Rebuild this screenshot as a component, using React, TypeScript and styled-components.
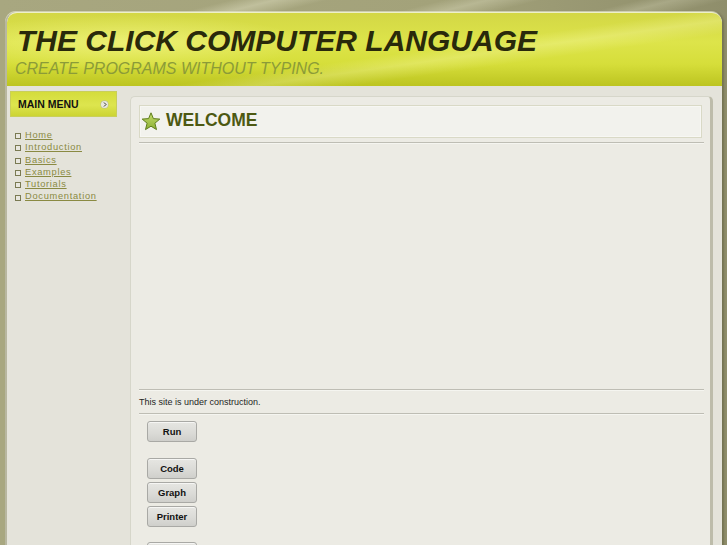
import React from "react";
import styled, { createGlobalStyle } from "styled-components";

const Global = createGlobalStyle`
  html, body { margin: 0; padding: 0; }
  body {
    background: #a3a27b;
    font-family: "Liberation Sans", Arial, sans-serif;
    overflow: hidden;
  }
`;

const Page = styled.div`
  min-height: 545px;
  box-sizing: border-box;
  padding: 12px 5px 0 5px;
  background:
    linear-gradient(166deg, transparent 0%, transparent 26%, rgba(255,255,230,0.3) 31%, transparent 37%, transparent 50%, rgba(255,255,230,0.25) 55%, transparent 61%, transparent 72%, rgba(255,255,230,0.2) 76%, transparent 82%) top / 100% 40px no-repeat,
    linear-gradient(90deg, #a8a780 0%, #a3a27a 60%, #8f8e6b 100%);
`;

const Frame = styled.div`
  width: 717px;
  min-height: 533px;
  box-sizing: border-box;
  background: #e4e3da;
  border-radius: 11px 11px 0 0;
  border-left: 2px solid #b8b7a0;
  box-shadow: 2px 0 2px rgba(70, 70, 40, 0.35), 0 -1px 0 rgba(255, 255, 235, 0.6);
  overflow: hidden;
`;

const Header = styled.header`
  height: 74px;
  box-sizing: border-box;
  padding: 11px 0 0 10px;
  border-top: 1px solid #eef0c8;
  background:
    radial-gradient(ellipse 260px 40px at 120px 30px, rgba(255,255,170,0.45), transparent 70%),
    linear-gradient(172deg, rgba(255,255,255,0) 55%, rgba(255,255,200,0.25) 62%, rgba(255,255,255,0) 70%),
    linear-gradient(180deg, #d3d745 0%, #dde44a 40%, #d6de3a 70%, #bcc420 100%);
  border-radius: 10px 10px 0 0;
`;

const Title = styled.h1`
  margin: 0;
  font-family: "Liberation Sans", Arial, sans-serif;
  font-size: 30px;
  line-height: 34px;
  font-weight: bold;
  font-style: italic;
  color: #29290b;
`;

const Slogan = styled.div`
  margin-top: 2px;
  font-size: 16px;
  line-height: 18px;
  font-style: italic;
  color: #8b9b38;
  margin-left: -2px;
`;

const Main = styled.div`
  display: flex;
  align-items: flex-start;
  padding: 0 9px 0 3px;
`;

const Sidebar = styled.aside`
  width: 107px;
  padding-top: 5px;
  margin-right: 13px;
  flex-shrink: 0;
`;

const MenuHead = styled.div`
  height: 26px;
  box-sizing: border-box;
  display: flex;
  align-items: center;
  justify-content: space-between;
  padding: 0 8px 0 7px;
  background: linear-gradient(180deg, #d4dc3c 0%, #dde54e 55%, #ccd434 100%);
  border: 1px solid #c9cf5a;
  font-size: 10.5px;
  font-weight: bold;
  color: #111;
`;

const ArrowDot = styled.span`
  width: 7px;
  height: 7px;
  border-radius: 50%;
  background: #e9e9dc;
  box-shadow: 0 0 0 0.5px #b8b89a;
  display: flex;
  align-items: center;
  justify-content: center;
`;

const MenuList = styled.ul`
  list-style: none;
  margin: 12px 0 0 0;
  padding: 0 0 0 5px;
`;

const MenuItem = styled.li`
  display: flex;
  align-items: center;
  height: 12.3px;
  font-size: 9.3px;
  line-height: 12.3px;
`;

const Bullet = styled.span`
  width: 6px;
  height: 6px;
  box-sizing: border-box;
  border: 1px solid #7a7a52;
  background: #e8e7df;
  margin: 2px 4px 0 0;
  flex-shrink: 0;
`;

const MenuLink = styled.a`
  color: #8a8a42;
  letter-spacing: 0.7px;
  text-decoration: underline;
  cursor: pointer;
`;

const Panel = styled.main`
  flex: 1;
  margin-top: 10px;
  min-height: 460px;
  box-sizing: border-box;
  padding: 8px 6px 0 8px;
  background: #ecebe4;
  border: 1px solid #d6d6ca;
  border-right: 3px solid #bdbcaa;
  border-bottom: none;
  border-radius: 5px 5px 0 0;
`;

const WelcomeBox = styled.div`
  width: 563px;
  height: 33px;
  box-sizing: border-box;
  display: flex;
  align-items: center;
  gap: 5px;
  padding-left: 1px;
  background: #f2f2ed;
  border: 1px solid #d9d9c6;
  box-shadow: inset 0 0 0 1px #f7f7f3;
`;

const WelcomeTitle = styled.h2`
  margin: -3px 0 0 0;
  font-size: 17.5px;
  font-weight: bold;
  color: #4d5912;
  line-height: 20px;
`;

const Rule = styled.div<{ $top?: number }>`
  width: 565px;
  height: 0;
  margin-top: ${(p) => p.$top ?? 0}px;
  border-top: 1px solid #bebdb4;
  border-bottom: 1px solid #f5f5f0;
`;

const Spacer = styled.div`
  height: 245px;
`;

const Note = styled.p`
  margin: 0;
  height: 22px;
  box-sizing: border-box;
  padding-top: 2px;
  font-size: 9px;
  line-height: 18px;
  color: #1e1e1e;
`;

const ButtonColumn = styled.div`
  display: flex;
  flex-direction: column;
  margin: 6px 0 0 8px;
`;

const Btn = styled.button<{ $gap?: number }>`
  width: 50px;
  height: 21px;
  margin-top: ${(p) => p.$gap ?? 0}px;
  padding: 0;
  font-family: "Liberation Sans", Arial, sans-serif;
  font-size: 9.5px;
  font-weight: bold;
  color: #111;
  background: linear-gradient(180deg, #e6e6e2 0%, #dadad6 60%, #cfcfcb 100%);
  border: 1px solid #a9a9a5;
  border-radius: 3px;
  box-shadow: inset 0 1px 0 #f6f6f4;
  cursor: pointer;
`;

const Star = () => (
  <svg width="20" height="19" viewBox="0 0 20 19">
    <defs>
      <linearGradient id="sg" x1="0" y1="0" x2="0" y2="1">
        <stop offset="0" stopColor="#c4dc6a" />
        <stop offset="1" stopColor="#8cb034" />
      </linearGradient>
    </defs>
    <path
      d="M10 0.8 L12.4 6.6 L18.8 7.1 L13.9 11.2 L15.5 17.6 L10 14.2 L4.5 17.6 L6.1 11.2 L1.2 7.1 L7.6 6.6 Z"
      fill="url(#sg)"
      stroke="#5f7d1e"
      strokeWidth="1"
      strokeLinejoin="round"
    />
  </svg>
);

const menu = ["Home", "Introduction", "Basics", "Examples", "Tutorials", "Documentation"];

export default function App() {
  return (
    <>
      <Global />
      <Page>
        <Frame>
          <Header>
            <Title>THE CLICK COMPUTER LANGUAGE</Title>
            <Slogan>CREATE PROGRAMS WITHOUT TYPING.</Slogan>
          </Header>
          <Main>
            <Sidebar>
              <MenuHead>
                <span>MAIN MENU</span>
                <ArrowDot>
                  <svg width="4" height="5" viewBox="0 0 4 5">
                    <path d="M1 0.5 L3 2.5 L1 4.5" fill="none" stroke="#333" strokeWidth="1" />
                  </svg>
                </ArrowDot>
              </MenuHead>
              <MenuList>
                {menu.map((m) => (
                  <MenuItem key={m}>
                    <Bullet />
                    <MenuLink>{m}</MenuLink>
                  </MenuItem>
                ))}
              </MenuList>
            </Sidebar>
            <Panel>
              <WelcomeBox>
                <Star />
                <WelcomeTitle>WELCOME</WelcomeTitle>
              </WelcomeBox>
              <Rule $top={4} />
              <Spacer />
              <Rule />
              <Note>This site is under construction.</Note>
              <Rule />
              <ButtonColumn>
                <Btn>Run</Btn>
                <Btn $gap={16}>Code</Btn>
                <Btn $gap={3}>Graph</Btn>
                <Btn $gap={3}>Printer</Btn>
                <Btn $gap={15} aria-label="more" />
              </ButtonColumn>
            </Panel>
          </Main>
        </Frame>
      </Page>
    </>
  );
}
